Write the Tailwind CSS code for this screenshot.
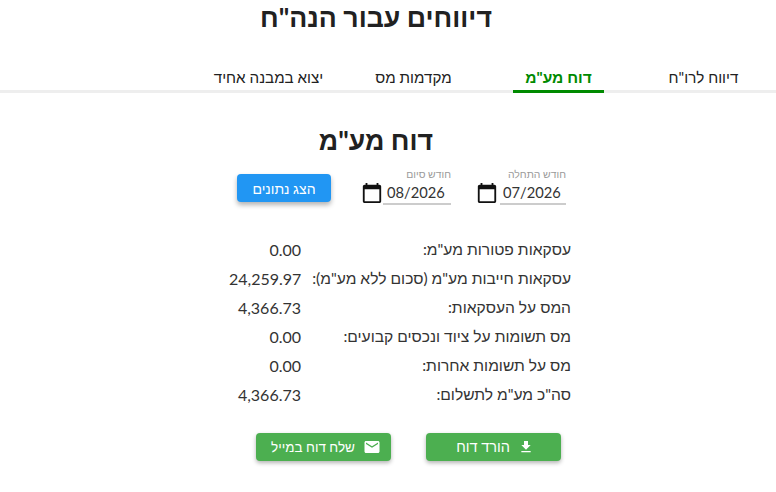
<!DOCTYPE html>
<html lang="he" dir="rtl">
<head>
<meta charset="utf-8">
<script src="https://cdn.jsdelivr.net/npm/@tailwindcss/browser@4"></script>
</head>
<body class="bg-white font-['Lato','Roboto',sans-serif] text-[#212121] overflow-hidden h-[492px]">
<h1 class="h-[62px] text-center text-[26.7px] leading-[34px] font-bold text-[#212121] pr-[24px]">דיווחים עבור הנה"ח</h1>
<nav class="flex h-[31px] border-b-[3px] border-[#eeeeee]">
  <div class="w-[145px] flex justify-center"><span class="text-[15.2px] leading-[30px] h-[28px]">דיווח לרו"ח</span></div>
  <div class="w-[145px] flex justify-center"><span class="w-[91px] text-center text-[15.5px] leading-[30px] h-[31px] font-bold text-[#008a00] border-b-[3px] border-[#008a00]">דוח מע"מ</span></div>
  <div class="w-[145px] flex justify-center"><span class="text-[15.2px] leading-[30px] h-[28px]">מקדמות מס</span></div>
  <div class="w-[145px] flex justify-center"><span class="text-[15.2px] leading-[30px] h-[28px]">יצוא במבנה אחיד</span></div>
</nav>
<h2 class="mt-[29px] h-[36px] text-center text-[26.7px] leading-[36px] font-bold pr-[24px]">דוח מע"מ</h2>
<div class="mt-[10px] flex justify-start items-start pr-[210px]">
  <div class="w-[90px]">
    <div class="text-[10.4px] leading-[12px] text-[#9a9a9a]">חודש התחלה</div>
    <div class="flex items-center gap-[2px]" dir="ltr">
      <svg class="w-[22px] h-[22px] shrink-0" viewBox="0 0 24 24" fill="#111"><path d="M20 3h-1V1h-2v2H7V1H5v2H4c-1.1 0-2 .9-2 2v16c0 1.1.9 2 2 2h16c1.1 0 2-.9 2-2V5c0-1.1-.9-2-2-2zm0 18H4V8h16v13z"/></svg>
      <div class="w-[66px] border-b-2 border-[#cccccc] text-[14.7px] leading-[24px] text-[#333] pl-[3px] h-[25px]">07/2026</div>
    </div>
  </div>
  <div class="w-[90px] mr-[25px]">
    <div class="text-[10.4px] leading-[12px] text-[#9a9a9a]">חודש סיום</div>
    <div class="flex items-center" dir="ltr">
      <svg class="w-[22px] h-[22px] shrink-0" viewBox="0 0 24 24" fill="#111"><path d="M20 3h-1V1h-2v2H7V1H5v2H4c-1.1 0-2 .9-2 2v16c0 1.1.9 2 2 2h16c1.1 0 2-.9 2-2V5c0-1.1-.9-2-2-2zm0 18H4V8h16v13z"/></svg>
      <div class="w-[68px] border-b-2 border-[#cccccc] text-[14.7px] leading-[24px] text-[#333] pl-[4px] h-[25px]">08/2026</div>
    </div>
  </div>
  <button class="w-[94px] h-[28px] mr-[30px] mt-[6px] rounded-[4px] bg-[#2196f3] text-white text-[14px] font-medium shadow-[0_3px_5px_rgba(0,0,0,0.3)]">הצג נתונים</button>
</div>
<div class="mt-[30px] mr-[205px] w-[342px] text-[15.6px] text-[#333] flex flex-col">
  <div class="h-[29px] flex justify-between items-center"><span>עסקאות פטורות מע"מ:</span><span class="w-[72px] text-right text-[16px]" dir="ltr">0.00</span></div>
  <div class="h-[29px] flex justify-between items-center"><span>עסקאות חייבות מע"מ (סכום ללא מע"מ):</span><span class="w-[72px] text-right text-[16px]" dir="ltr">24,259.97</span></div>
  <div class="h-[29px] flex justify-between items-center"><span>המס על העסקאות:</span><span class="w-[72px] text-right text-[16px]" dir="ltr">4,366.73</span></div>
  <div class="h-[29px] flex justify-between items-center"><span>מס תשומות על ציוד ונכסים קבועים:</span><span class="w-[72px] text-right text-[16px]" dir="ltr">0.00</span></div>
  <div class="h-[29px] flex justify-between items-center"><span>מס על תשומות אחרות:</span><span class="w-[72px] text-right text-[16px]" dir="ltr">0.00</span></div>
  <div class="h-[29px] flex justify-between items-center"><span>סה"כ מע"מ לתשלום:</span><span class="w-[72px] text-right text-[16px]" dir="ltr">4,366.73</span></div>
</div>
<div class="mt-[24px] flex pr-[215px] gap-[35px]">
  <button class="w-[135px] h-[28px] pl-[3px] rounded-[4px] bg-[#4caf50] text-white text-[14.5px] font-medium shadow-[0_2px_4px_rgba(0,0,0,0.3)] flex items-center justify-center gap-[8px]">
    <svg class="w-[16px] h-[16px]" viewBox="0 0 24 24" fill="#fff"><path d="M19 9h-4V3H9v6H5l7 7 7-7zM5 18v2h14v-2H5z"/></svg>
    <span>הורד דוח</span>
  </button>
  <button class="w-[135px] h-[28px] pl-[5px] rounded-[4px] bg-[#4caf50] text-white text-[13.5px] font-medium shadow-[0_2px_4px_rgba(0,0,0,0.3)] flex items-center justify-center gap-[8px]">
    <svg class="w-[18px] h-[18px]" viewBox="0 0 24 24" fill="#fff"><path d="M20 4H4c-1.1 0-2 .9-2 2v12c0 1.1.9 2 2 2h16c1.1 0 2-.9 2-2V6c0-1.1-.9-2-2-2zm0 4l-8 5-8-5V6l8 5 8-5v2z"/></svg>
    <span>שלח דוח במייל</span>
  </button>
</div>
</body>
</html>
